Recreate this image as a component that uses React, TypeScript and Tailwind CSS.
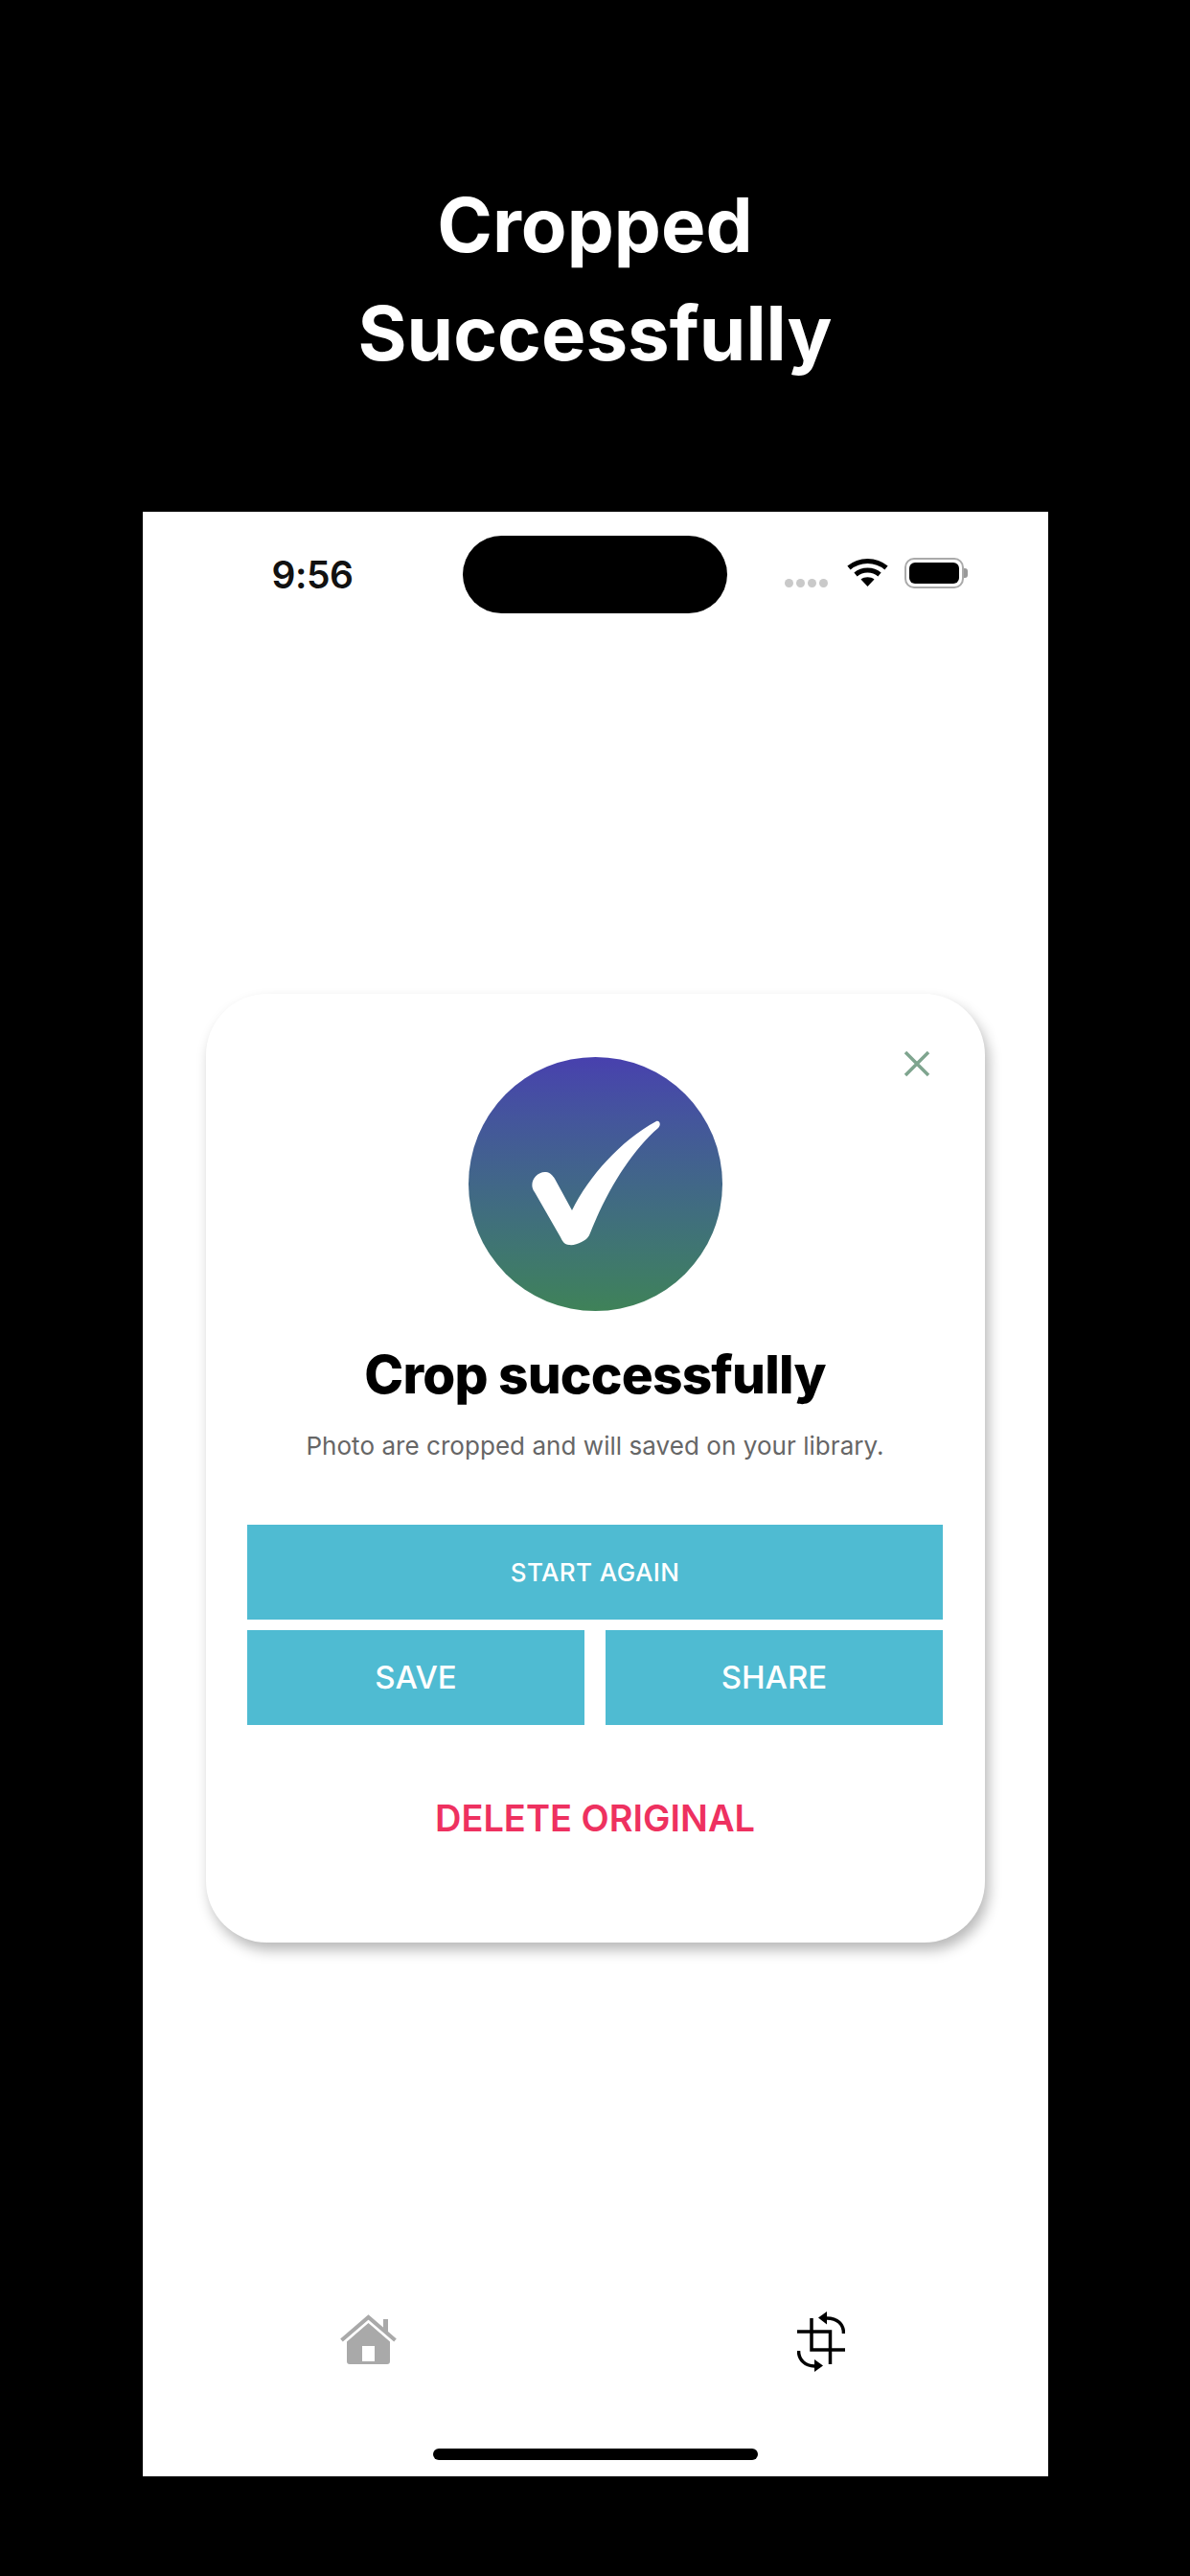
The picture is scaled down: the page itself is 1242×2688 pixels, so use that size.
import React from 'react';

const inter = "font-['Inter','Liberation_Sans',sans-serif]";

const StatusBar = () => (
    <div className="flex items-center pt-[25px] pl-[135px] h-[106px] shrink-0">
        <span className={`w-[199px] text-[39px] leading-[81px] font-semibold tracking-[-0.5px] text-[#111] ${inter}`}>9:56</span>
        <div className="w-[276px] h-[81px] rounded-[41px] bg-black shrink-0" />
        <div className="flex items-center ml-[60px] -mt-[2px]">
            <div className="flex gap-[3px] mt-[20px]">
                <span className="w-[9px] h-[9px] rounded-full bg-[#c9c9c9]" />
                <span className="w-[9px] h-[9px] rounded-full bg-[#c9c9c9]" />
                <span className="w-[9px] h-[9px] rounded-full bg-[#c9c9c9]" />
                <span className="w-[9px] h-[9px] rounded-full bg-[#c9c9c9]" />
            </div>
            <svg className="ml-[20px] -mt-[2px]" width="43" height="31" viewBox="0 0 43 31" fill="none" stroke="#000" strokeWidth="5">
                <path d="M2 10.5 C13 1 30 1 41 10.5" />
                <path d="M9 17.5 C16 11.5 27 11.5 34 17.5" />
                <path d="M21.5 30 L14.5 22.5 C18 19.5 25 19.5 28.5 22.5 Z" fill="#000" stroke="none" />
            </svg>
            <div className="ml-[17px] -mt-[2px] flex items-center">
                <div className="w-[62px] h-[32px] rounded-[10px] border-[2px] border-[#aaa] p-[3px]">
                    <div className="w-full h-full rounded-[6px] bg-black" />
                </div>
                <div className="w-[4px] h-[10px] rounded-r-[3px] bg-[#999]" />
            </div>
        </div>
    </div>
);

const CheckBadge = () => (
    <div className="w-[265px] h-[265px] rounded-full bg-gradient-to-b from-[#4840ae] to-[#3f8258] flex items-center justify-center">
        <svg width="265" height="265" viewBox="0 0 265 265">
            <path fill="#fff" d="M196 67 C200 66 201 71 198 74 C170 98 144 140 126 186 C123 192 112 197 105 196 C100 196 98 192 96 188 L69 141 C62 132 70 119 81 120 C85 120 88 124 90 127 L108 160 C126 124 158 88 196 67 Z" />
        </svg>
    </div>
);

const SuccessCard = () => (
    <div className={`relative w-[813px] h-[990px] mt-[397px] ml-[66px] bg-white rounded-[64px] shadow-[4px_8px_14px_rgba(0,0,0,0.28)] flex flex-col items-center pt-[66px] ${inter}`}>
        <svg className="absolute top-[59px] right-[57px]" width="28" height="28" viewBox="0 0 28 28" stroke="#7fa58f" strokeWidth="3.5" fill="none">
            <path d="M2 2 L26 26 M26 2 L2 26" />
        </svg>
        <CheckBadge />
        <h2 className="mt-[36px] text-[55px] leading-[60px] font-extrabold tracking-[-0.8px] text-black">Crop successfully</h2>
        <p className="mt-[29px] text-[26px] leading-[32px] tracking-[0.05px] text-[#666]">Photo are cropped and will saved on your library.</p>
        <div className="mt-[66px] w-[726px] flex flex-col gap-[11px]">
            <button className="h-[99px] bg-[#4fbbd2] text-white text-[26px] font-medium tracking-[0.4px]">START AGAIN</button>
            <div className="flex justify-between">
                <button className="w-[352px] h-[99px] bg-[#4fbbd2] text-white text-[33px] font-medium">SAVE</button>
                <button className="w-[352px] h-[99px] bg-[#4fbbd2] text-white text-[33px] font-medium">SHARE</button>
            </div>
        </div>
        <button className="mt-[74px] text-[38px] leading-[46px] font-semibold text-[#ee3160]">DELETE ORIGINAL</button>
    </div>
);

const TabBar = () => (
    <div className="mt-auto shrink-0">
        <div className="flex justify-between pl-[206px] pr-[212px]">
            <svg width="59" height="52" viewBox="0 0 59 52" className="mt-[3px]">
                <path d="M1.5 27 L29.5 3 L57.5 27" fill="none" stroke="#a9a9a9" strokeWidth="4" />
                <path d="M45 14 V5 H50 V20 Z" fill="#a9a9a9" />
                <path fillRule="evenodd" fill="#a9a9a9" d="M29.5 9 L52 28.5 V49 Q52 52 49 52 H10 Q7 52 7 49 V28.5 Z M23 33 V49 H36 V33 Z" />
            </svg>
            <svg width="50" height="63" viewBox="0 0 50 63" fill="none" stroke="#000" strokeWidth="3.5">
                <path d="M15 7 V40 H50 M0 21 H34.5 V55" />
                <path d="M48.5 23 C48.5 13 42 7 31 7" />
                <path d="M1.5 41 C1.5 50 8 57 18 57" />
                <path d="M31 0 V13.5 L22 6.5 Z" fill="#000" stroke="none" />
                <path d="M18 50 V63 L27 56.5 Z" fill="#000" stroke="none" />
            </svg>
        </div>
        <div className="mt-[80px] mb-[17px] mx-auto w-[339px] h-[12px] rounded-full bg-black" />
    </div>
);

export default function App() {
    return (
        <div className="w-[1242px] h-[2688px] bg-black flex flex-col items-center overflow-hidden">
            <h1 className={`h-[534px] pt-[178px] text-center text-white text-[78px] leading-[113px] font-bold ${inter}`}>
                Cropped
                <br />
                Successfully
            </h1>
            <div className="w-[945px] h-[2050px] bg-white flex flex-col">
                <StatusBar />
                <SuccessCard />
                <TabBar />
            </div>
        </div>
    );
}
